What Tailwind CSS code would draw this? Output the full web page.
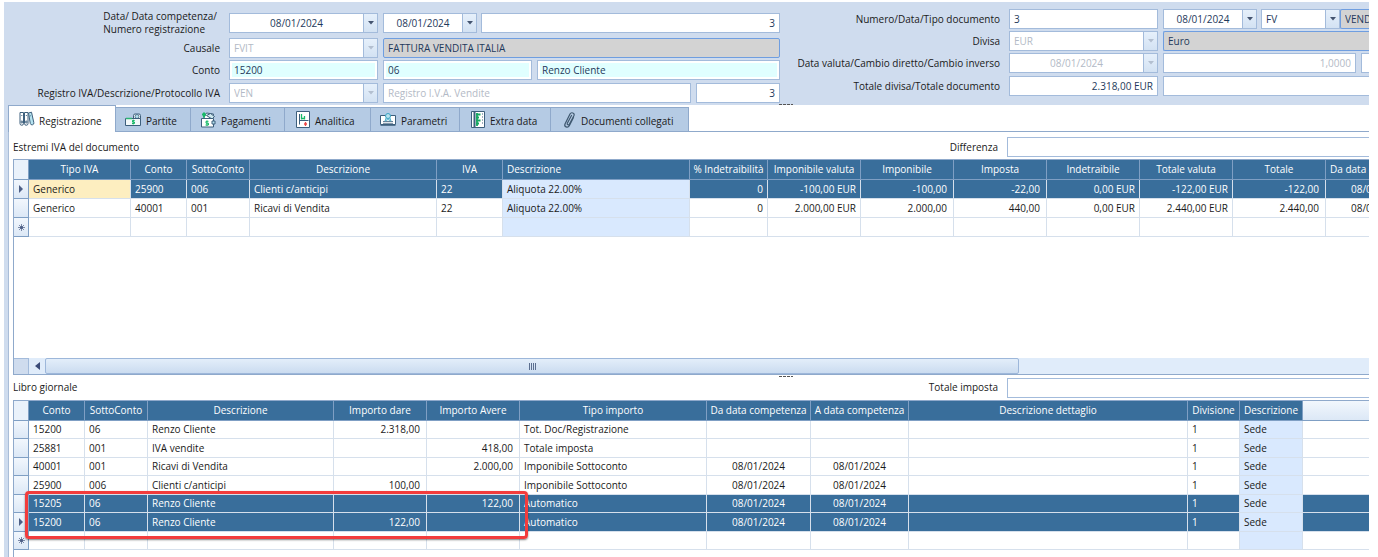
<!DOCTYPE html>
<html lang="it">
<head>
<meta charset="utf-8">
<title>Registrazione contabile</title>
<script src="https://cdn.jsdelivr.net/npm/@tailwindcss/browser@4"></script>
</head>
<body class="bg-white font-['Open_Sans','Noto_Sans',sans-serif] text-[10px] leading-[13px] text-[#1a1a1a]">
<main class="flex h-screen flex-col overflow-hidden pt-0.5 pr-[9px] pl-1">

<form class="relative flex h-[103px] shrink-0 overflow-hidden bg-[#cfdcee] text-[#1e395b] [&_input]:min-w-0 [&_input]:bg-transparent [&_input]:px-1 [&_input]:outline-none [&_label]:shrink-0 [&_label]:text-right [&_label]:whitespace-nowrap [&_label]:text-[#1a1a1a] [&_select]:min-w-0 [&_select]:appearance-none [&_select]:bg-transparent [&_select]:px-1 [&_button]:flex [&_button]:w-3.5 [&_button]:shrink-0 [&_button]:items-center [&_button]:justify-center [&_button]:border-l [&_button]:border-[#a3bbdb] [&_button]:bg-linear-to-b [&_button]:from-[#e6f0fb] [&_button]:to-[#d3e2f3]">
  <!-- Testata registrazione -->
  <div class="flex w-[776px] shrink-0 flex-col pt-[11px]">
    <div class="mb-[5px] flex h-5 items-center">
      <label for="data" class="-my-1 flex w-[216px] justify-end pr-[3px]"><span class="text-left">Data/ Data competenza/<br>Numero registrazione</span></label>
      <div class="ml-[9px] flex h-5 w-[149px] border border-[#a3bbdb] bg-white"><input id="data" class="flex-1 text-center" value="08/01/2024"><button type="button" aria-label="Apri calendario"><svg class="h-1 w-1.5 fill-[#44546f]" viewBox="0 0 6 4"><path d="M0 0h6L3 3.5z"/></svg></button></div>
      <div class="ml-[5px] flex h-5 w-[94px] border border-[#a3bbdb] bg-white"><input aria-label="Data competenza" class="flex-1 text-center" value="08/01/2024"><button type="button" aria-label="Apri calendario"><svg class="h-1 w-1.5 fill-[#44546f]" viewBox="0 0 6 4"><path d="M0 0h6L3 3.5z"/></svg></button></div>
      <input aria-label="Numero registrazione" class="ml-1 h-5 flex-1 border border-[#a3bbdb] !bg-white text-right" value="3">
    </div>
    <div class="mb-0.5 flex h-5 items-center">
      <label for="causale" class="w-[216px]">Causale</label>
      <div class="ml-[9px] flex h-5 w-[149px] border border-[#a3bbdb] bg-white text-[#b3bac6]"><select id="causale" disabled class="flex-1"><option>FVIT</option></select><button type="button" disabled aria-label="Apri elenco"><svg class="h-1 w-1.5 fill-[#b3bfd0]" viewBox="0 0 6 4"><path d="M0 0h6L3 3.5z"/></svg></button></div>
      <input aria-label="Descrizione causale" readonly class="ml-[5px] h-5 flex-1 rounded-xs border border-[#6f9ee0] !bg-[#d3d3d3]" value="FATTURA VENDITA ITALIA">
    </div>
    <div class="mb-[3px] flex h-5 items-center">
      <label for="conto" class="w-[216px]">Conto</label>
      <div class="ml-[9px] flex h-5 w-[149px] border border-[#a3bbdb] bg-white p-0.5"><input id="conto" class="flex-1 !bg-[#e0ffff] !px-0.5" value="15200"></div>
      <div class="ml-[5px] flex h-5 w-[149px] border border-[#a3bbdb] bg-white p-0.5"><input aria-label="Sottoconto" class="flex-1 !bg-[#e0ffff] !px-0.5" value="06"></div>
      <div class="ml-[5px] flex h-5 flex-1 border border-[#a3bbdb] bg-white p-0.5"><input aria-label="Intestatario" class="flex-1 !bg-[#e0ffff] !px-0.5" value="Renzo Cliente"></div>
    </div>
    <div class="flex h-5 items-center">
      <label for="registro" class="w-[216px]">Registro IVA/Descrizione/Protocollo IVA</label>
      <div class="ml-[9px] flex h-5 w-[149px] border border-[#a3bbdb] bg-white text-[#b3bac6]"><select id="registro" disabled class="flex-1"><option>VEN</option></select><button type="button" disabled aria-label="Apri elenco"><svg class="h-1 w-1.5 fill-[#b3bfd0]" viewBox="0 0 6 4"><path d="M0 0h6L3 3.5z"/></svg></button></div>
      <input aria-label="Descrizione registro" disabled class="ml-[5px] h-5 flex-1 border border-[#a3bbdb] !bg-white text-[#b3bac6]" value="Registro I.V.A. Vendite">
      <input aria-label="Protocollo IVA" class="ml-[5px] h-5 w-[84px] border border-[#a3bbdb] !bg-white text-right" value="3">
    </div>
  </div>
  <!-- Dati documento -->
  <div class="flex min-w-0 flex-1 flex-col overflow-hidden pt-[7px]">
    <div class="mb-0.5 flex h-5 items-center">
      <label for="numdoc" class="w-[220px]">Numero/Data/Tipo documento</label>
      <input id="numdoc" class="ml-[9px] h-5 w-[149px] shrink-0 border border-[#a3bbdb] !bg-white" value="3">
      <div class="ml-[5px] flex h-5 w-[94px] shrink-0 border border-[#a3bbdb] bg-white"><input aria-label="Data documento" class="flex-1 text-center" value="08/01/2024"><button type="button" aria-label="Apri calendario"><svg class="h-1 w-1.5 fill-[#44546f]" viewBox="0 0 6 4"><path d="M0 0h6L3 3.5z"/></svg></button></div>
      <div class="ml-1 flex h-5 w-[79px] shrink-0 border border-[#a3bbdb] bg-white"><select aria-label="Tipo documento" class="flex-1"><option>FV</option></select><button type="button" aria-label="Apri elenco"><svg class="h-1 w-1.5 fill-[#44546f]" viewBox="0 0 6 4"><path d="M0 0h6L3 3.5z"/></svg></button></div>
      <input aria-label="Descrizione tipo documento" readonly class="h-5 flex-1 rounded-l-xs border border-r-0 border-[#6f9ee0] !bg-[#d3d3d3] !pr-0" value="VENDITA">
    </div>
    <div class="mb-0.5 flex h-5 items-center">
      <label for="divisa" class="w-[220px]">Divisa</label>
      <div class="ml-[9px] flex h-5 w-[149px] shrink-0 border border-[#a3bbdb] bg-white text-[#b3bac6]"><select id="divisa" disabled class="flex-1"><option>EUR</option></select><button type="button" disabled aria-label="Apri elenco"><svg class="h-1 w-1.5 fill-[#b3bfd0]" viewBox="0 0 6 4"><path d="M0 0h6L3 3.5z"/></svg></button></div>
      <input aria-label="Descrizione divisa" readonly class="ml-[5px] h-5 flex-1 rounded-l-xs border border-r-0 border-[#6f9ee0] !bg-[#d3d3d3]" value="Euro">
    </div>
    <div class="mb-[3px] flex h-5 items-center">
      <label for="valuta" class="w-[220px]">Data valuta/Cambio diretto/Cambio inverso</label>
      <div class="ml-[9px] flex h-5 w-[149px] shrink-0 border border-[#a3bbdb] bg-white text-[#b3bac6]"><input id="valuta" disabled class="flex-1 text-center" value="08/01/2024"><button type="button" disabled aria-label="Apri calendario"><svg class="h-1 w-1.5 fill-[#b3bfd0]" viewBox="0 0 6 4"><path d="M0 0h6L3 3.5z"/></svg></button></div>
      <input aria-label="Cambio diretto" disabled class="ml-[5px] h-5 w-[193px] shrink-0 border border-[#a3bbdb] !bg-white text-right text-[#b3bac6]" value="1,0000">
      <input aria-label="Cambio inverso" disabled class="ml-[5px] h-5 flex-1 border border-r-0 border-[#a3bbdb] !bg-white !px-0">
    </div>
    <div class="flex h-5 items-center">
      <label for="totale" class="w-[220px]">Totale divisa/Totale documento</label>
      <input id="totale" class="ml-[9px] h-5 w-[149px] shrink-0 border border-[#a3bbdb] !bg-white text-right" value="2.318,00 EUR">
      <input aria-label="Totale documento" class="ml-[5px] h-5 flex-1 border border-r-0 border-[#a3bbdb] !bg-white">
    </div>
  </div>
  <div class="absolute bottom-0 left-[775px] h-px w-3.5 bg-[repeating-linear-gradient(90deg,#555_0_3px,transparent_3px_4px)]"></div>
</form>

<div class="flex min-h-0 flex-1 bg-[#cfdcee] pl-1">
<div class="flex min-w-0 flex-1 flex-col bg-white">
  <nav role="tablist" class="flex h-[27px] shrink-0 items-end border-b border-[#8fa9cb] [&_button]:flex [&_button]:shrink-0 [&_button]:items-center [&_button]:gap-1 [&_button]:border-[#8fa9cb] [&_button]:pl-2 [&_svg]:shrink-0 [&_span]:pt-1 [&_span]:whitespace-nowrap">
    <button role="tab" aria-selected="true" class="-mb-px h-[27px] w-[108px] border-t border-r border-l bg-white">
      <svg class="ml-px h-4 w-[17px]" viewBox="0 0 17 16" fill="#fff" stroke="#3d5f7c"><path d="M2 1.500h3.500v11a1.700 1.700 0 0 1-3.500 0z"/><path d="M6.500 1.500h3.500v11a1.700 1.700 0 0 1-3.500 0z"/><path d="M10.500 2l3-.8 2.300 10.300a1.800 1.800 0 0 1-3.500 1z" fill="#b5e3f0"/><path d="M3.200 4.500h1.200M7.800 4.500h1.200M11.700 5l1.200-.3M3.200 10h1.200v2H3.200zM7.700 10h1.200v2H7.700z" stroke-width=".8"/></svg>
      <span>Registrazione</span></button>
    <button role="tab" class="h-6 w-[75px] border-t border-r bg-[#b5cbe4]">
      <svg class="h-4 w-[18px]" viewBox="0 0 18 16" fill="#fff" stroke="#3d5f7c"><path d="M9.500 6.500v-3A1.500 1.500 0 0 1 11 2h4a1.500 1.500 0 0 1 1.500 1.500v4"/><circle cx="13" cy="4.500" r="2" fill="#b7e2ee" stroke-width=".8"/><path d="M1.500 6.500h15v7h-15z" fill="#f3f9fa"/><path d="M2 6.500h6" stroke="#29b573" stroke-width="1.500"/><path d="M9.200 7.500v5M10.700 8.500H8.500V10h2v1.500H8" fill="none" stroke="#18b968"/></svg>
      <span>Partite</span></button>
    <button role="tab" class="h-6 w-[94px] border-t border-r bg-[#b5cbe4]">
      <svg class="h-[18px] w-[18px]" viewBox="0 0 18 18" fill="#fff" stroke="#3d5f7c"><path d="M4.500 7.500l3-5.500 7 1-1 4.500z"/><path d="M7.500 4.500l4-2 4 3-2.500 2.500z" fill="#cfe9ef"/><path d="M2.500 7.500h12v8.500h-12z"/><path d="M13 10h3v3h-3z" fill="#b7e2ee"/><path d="M3 3.500h4M5 1.500v5" stroke="#18b968" stroke-width="2"/><path d="M8 9.500v5.500M9.500 10.300H7v1.900h2.500V14H6.500" fill="none" stroke="#18b968"/></svg>
      <span>Pagamenti</span></button>
    <button role="tab" class="h-6 w-[86px] border-t border-r bg-[#b5cbe4] !pl-2.5">
      <svg class="h-[17px] w-4" viewBox="0 0 16 17" fill="none"><path d="M1.500.5h13v16h-13z" fill="#fff" stroke="#3d5f7c"/><path d="M4.500 3v10.500M4.500 9.500h9" stroke="#3d5f7c"/><path d="M6.500 3v5.500M6.500 7.500h3M9.500 5v3.500" stroke="#18b968" stroke-width="1.300"/><path d="M10.500 11v4M9 13h3" stroke="#ed4848" stroke-width="1.300"/></svg>
      <span>Analitica</span></button>
    <button role="tab" class="h-6 w-[89px] border-t border-r bg-[#b5cbe4]">
      <svg class="h-4 w-[18px]" viewBox="0 0 18 16" fill="none" stroke="#3d5f7c"><path d="M1.500 3.500h15v9h-15z" fill="#fff"/><path d="M1.500 13.500h15M4 9.500h10M4 11.300h10" stroke-width=".8"/><path d="M7 6l-1 3 3-1.500 3 1.500-1-3" fill="#b7e2ee" stroke="#5bb4ce"/><circle cx="9" cy="4" r="2.500" fill="#b7e2ee" stroke="#39a4c2"/></svg>
      <span>Parametri</span></button>
    <button role="tab" class="h-6 w-[91px] border-t border-r bg-[#b5cbe4] !pl-2.5">
      <svg class="h-[17px] w-4" viewBox="0 0 16 17" fill="none"><path d="M1.500.5h13v16h-13z" fill="#fff" stroke="#3d5f7c"/><path d="M4.500 1v15" stroke="#3d5f7c" stroke-width="2"/><path d="M7 2v13M6 3.500h4.500M6 6.500h3M6 9.500h4.500M6 12.500h3" stroke="#18a862" stroke-width="1.800"/><path d="M12 3h1M12 6h1M12 9h1M12 12h1" stroke="#3d5f7c"/></svg>
      <span>Extra data</span></button>
    <button role="tab" class="h-6 w-[138px] border-t border-r bg-[#b5cbe4] !pl-2.5">
      <svg class="h-[18px] w-4" viewBox="0 0 16 18" fill="none" stroke="#3f586f" stroke-width="1.200" stroke-linecap="round"><path d="M12.500 6.500l-4.200 8.200c-1.500 2.800-5.500 1-4.300-1.800L9 3c1.200-2.300 5-1 4 1.500L8.500 13c-.8 1.600-2.800.7-2.200-.8L10.500 4.500"/></svg>
      <span>Documenti collegati</span></button>
  </nav>

  <section class="flex min-h-0 flex-1 flex-col border-l border-[#a9bdd8] pl-1">
    <div class="flex h-[27px] shrink-0 items-center pt-1">
      <h2 class="w-[600px]">Estremi IVA del documento</h2>
      <label for="differenza" class="w-[385px] shrink-0 text-right">Differenza</label>
      <input id="differenza" class="-mt-0.5 ml-[9px] h-5 min-w-0 flex-1 border border-r-0 border-[#a3bbdb] bg-white px-1">
    </div>
    <div class="flex min-h-0 flex-1 flex-col overflow-hidden border-t border-b border-l border-[#8fa9cb]">
      <table class="w-[1416px] shrink-0 table-fixed border-separate border-spacing-0 whitespace-nowrap [&_td]:overflow-hidden [&_td]:border-r [&_td]:border-b [&_td]:border-[#d6e0ec] [&_td]:px-1 [&_td]:py-0 [&_td:nth-child(n+8)]:text-right [&_td:nth-child(10)]:pr-1.5 [&_td:nth-child(11)]:pr-1.5 [&_td:nth-child(14)]:pr-1.5 [&_td:nth-child(7)]:bg-[#d9e9fe] [&_td:nth-child(7)]:text-[#1a1a1a] [&_th]:border-r [&_th]:border-b [&_th]:border-[#7f9fc4] [&_th]:px-1 [&_th]:py-0 [&_th]:font-normal [&_tbody_th]:bg-linear-to-b [&_tbody_th]:from-[#f2f7fd] [&_tbody_th]:to-[#dce8f6] [&_tbody_th]:!px-0 [&_tbody_tr]:h-[19px]">
        <colgroup><col class="w-[15px]"><col class="w-[102px]"><col class="w-14"><col class="w-[63px]"><col class="w-[187px]"><col class="w-[66px]"><col class="w-[187px]"><col class="w-[78px]"><col class="w-[93px]"><col class="w-[93px]"><col class="w-[93px]"><col class="w-[93px]"><col class="w-[93px]"><col class="w-[93px]"><col class="w-[104px]"></colgroup>
        <thead><tr class="h-5 bg-[#396e9b] text-white"><th class="bg-[#eaf2fb]"></th><th>Tipo IVA</th><th>Conto</th><th class="!px-0">SottoConto</th><th>Descrizione</th><th>IVA</th><th class="text-left">Descrizione</th><th class="!px-0">% Indetraibilità</th><th>Imponibile valuta</th><th>Imponibile</th><th>Imposta</th><th>Indetraibile</th><th>Totale valuta</th><th>Totale</th><th>Da data competenza</th></tr></thead>
        <tbody>
          <tr class="bg-[#396e9b] text-white"><th><svg class="mx-auto h-2 w-1 fill-[#4d5f86]" viewBox="0 0 4 8"><path d="M0 0l4 4-4 4z"/></svg></th><td class="bg-[#fdeec0] text-[#1a1a1a]">Generico</td><td>25900</td><td>006</td><td>Clienti c/anticipi</td><td>22</td><td>Aliquota 22.00%</td><td>0</td><td>-100,00 EUR</td><td>-100,00</td><td>-22,00</td><td>0,00 EUR</td><td>-122,00 EUR</td><td>-122,00</td><td class="!text-center">08/01/2024</td></tr>
          <tr><th></th><td>Generico</td><td>40001</td><td>001</td><td>Ricavi di Vendita</td><td>22</td><td>Aliquota 22.00%</td><td>0</td><td>2.000,00 EUR</td><td>2.000,00</td><td>440,00</td><td>0,00 EUR</td><td>2.440,00 EUR</td><td>2.440,00</td><td class="!text-center">08/01/2024</td></tr>
          <tr><th><svg class="mx-auto h-[7px] w-[7px]" viewBox="0 0 7 7" stroke="#4d5f86"><path d="M3.500 0v7M0 3.500h7M1 1l5 5M6 1L1 6" stroke-width=".7"/><circle cx="3.500" cy="3.500" r="1.500" fill="#4d5f86" stroke="none"/></svg></th><td></td><td></td><td></td><td></td><td></td><td></td><td></td><td></td><td></td><td></td><td></td><td></td><td></td><td></td></tr>
        </tbody>
      </table>
      <div class="mt-auto flex h-4 shrink-0 bg-[#e0ecfa]">
        <div class="w-[15px] border-t border-r border-[#a3bbdb] bg-[#cfdcee]"></div>
        <button aria-label="Scorri a sinistra" class="flex w-4 items-center justify-center"><svg class="h-2 w-[5px] fill-[#3b4b78]" viewBox="0 0 5 8"><path d="M5 0v8L0 4z"/></svg></button>
        <div class="flex w-[974px] items-center justify-center gap-px rounded-xs border border-[#9db7da] bg-linear-to-b from-[#e3eefa] to-[#cbdcf0]"><i class="h-[7px] w-px bg-[#5c6f90]"></i><i class="h-[7px] w-px bg-[#5c6f90]"></i><i class="h-[7px] w-px bg-[#5c6f90]"></i><i class="h-[7px] w-px bg-[#5c6f90]"></i></div>
      </div>
    </div>

    <div class="relative flex h-[25px] shrink-0 items-center">
      <div class="absolute top-px left-[766px] h-px w-3.5 bg-[repeating-linear-gradient(90deg,#555_0_3px,transparent_3px_4px)]"></div>
      <h2 class="w-[600px]">Libro giornale</h2>
      <label for="imposta" class="w-[385px] shrink-0 text-right">Totale imposta</label>
      <input id="imposta" class="ml-[9px] h-5 min-w-0 flex-1 border border-r-0 border-[#a3bbdb] bg-white px-1">
    </div>
    <div class="relative h-[157px] shrink-0 border-t border-l border-[#8fa9cb]">
      <table class="w-full table-fixed border-separate border-spacing-0 whitespace-nowrap [&_td]:border-r [&_td]:border-b [&_td]:border-[#d6e0ec] [&_td]:px-1 [&_td]:py-0 [&_td:nth-child(5)]:pr-1.5 [&_td:nth-child(5)]:text-right [&_td:nth-child(6)]:pr-1.5 [&_td:nth-child(6)]:text-right [&_td:nth-child(8)]:text-center [&_td:nth-child(9)]:text-center [&_td:nth-child(12)]:bg-[#d9e9fe] [&_td:nth-child(12)]:text-[#1a1a1a] [&_td:nth-child(13)]:border-r-0 [&_th]:border-r [&_th]:border-b [&_th]:border-[#7f9fc4] [&_th]:px-0 [&_th]:py-0 [&_th]:font-normal [&_tbody_th]:bg-linear-to-b [&_tbody_th]:from-[#f2f7fd] [&_tbody_th]:to-[#dce8f6] [&_tbody_tr:nth-child(odd)]:h-[18px] [&_tbody_tr:nth-child(even)]:h-[19px]">
        <colgroup><col class="w-[15px]"><col class="w-14"><col class="w-[63px]"><col class="w-[186px]"><col class="w-[93px]"><col class="w-[93px]"><col class="w-[187px]"><col class="w-[104px]"><col class="w-[98px]"><col class="w-[279px]"><col class="w-[52px]"><col class="w-[63px]"><col></colgroup>
        <thead><tr class="h-5 bg-[#396e9b] text-white"><th class="bg-[#eaf2fb]"></th><th>Conto</th><th>SottoConto</th><th>Descrizione</th><th>Importo dare</th><th>Importo Avere</th><th>Tipo importo</th><th>Da data competenza</th><th>A data competenza</th><th>Descrizione dettaglio</th><th>Divisione</th><th>Descrizione</th><th class="!border-r-0 bg-linear-to-b from-[#f2f7fd] to-[#dce8f6]"></th></tr></thead>
        <tbody>
          <tr><th></th><td>15200</td><td>06</td><td>Renzo Cliente</td><td>2.318,00</td><td></td><td>Tot. Doc/Registrazione</td><td></td><td></td><td></td><td>1</td><td>Sede</td><td></td></tr>
          <tr><th></th><td>25881</td><td>001</td><td>IVA vendite</td><td></td><td>418,00</td><td>Totale imposta</td><td></td><td></td><td></td><td>1</td><td>Sede</td><td></td></tr>
          <tr><th></th><td>40001</td><td>001</td><td>Ricavi di Vendita</td><td></td><td>2.000,00</td><td>Imponibile Sottoconto</td><td>08/01/2024</td><td>08/01/2024</td><td></td><td>1</td><td>Sede</td><td></td></tr>
          <tr><th></th><td>25900</td><td>006</td><td>Clienti c/anticipi</td><td>100,00</td><td></td><td>Imponibile Sottoconto</td><td>08/01/2024</td><td>08/01/2024</td><td></td><td>1</td><td>Sede</td><td></td></tr>
          <tr class="bg-[#396e9b] text-white"><th></th><td>15205</td><td>06</td><td>Renzo Cliente</td><td></td><td>122,00</td><td>Automatico</td><td>08/01/2024</td><td>08/01/2024</td><td></td><td>1</td><td>Sede</td><td></td></tr>
          <tr class="bg-[#396e9b] text-white"><th><svg class="mx-auto h-2 w-1 fill-[#4d5f86]" viewBox="0 0 4 8"><path d="M0 0l4 4-4 4z"/></svg></th><td>15200</td><td>06</td><td>Renzo Cliente</td><td>122,00</td><td></td><td>Automatico</td><td>08/01/2024</td><td>08/01/2024</td><td></td><td>1</td><td>Sede</td><td></td></tr>
          <tr><th><svg class="mx-auto h-[7px] w-[7px]" viewBox="0 0 7 7" stroke="#4d5f86"><path d="M3.500 0v7M0 3.500h7M1 1l5 5M6 1L1 6" stroke-width=".7"/><circle cx="3.500" cy="3.500" r="1.500" fill="#4d5f86" stroke="none"/></svg></th><td></td><td></td><td></td><td></td><td></td><td></td><td></td><td></td><td></td><td></td><td></td><td></td></tr>
        </tbody>
      </table>
      <div class="pointer-events-none absolute top-[90px] left-[11px] h-[48px] w-[503px] rounded-sm border-[3px] border-[#f23c3c] shadow-[0_1px_2px_rgba(0,0,0,0.5)]"></div>
    </div>
  </section>
</div>
</div>
</main>
</body>
</html>
